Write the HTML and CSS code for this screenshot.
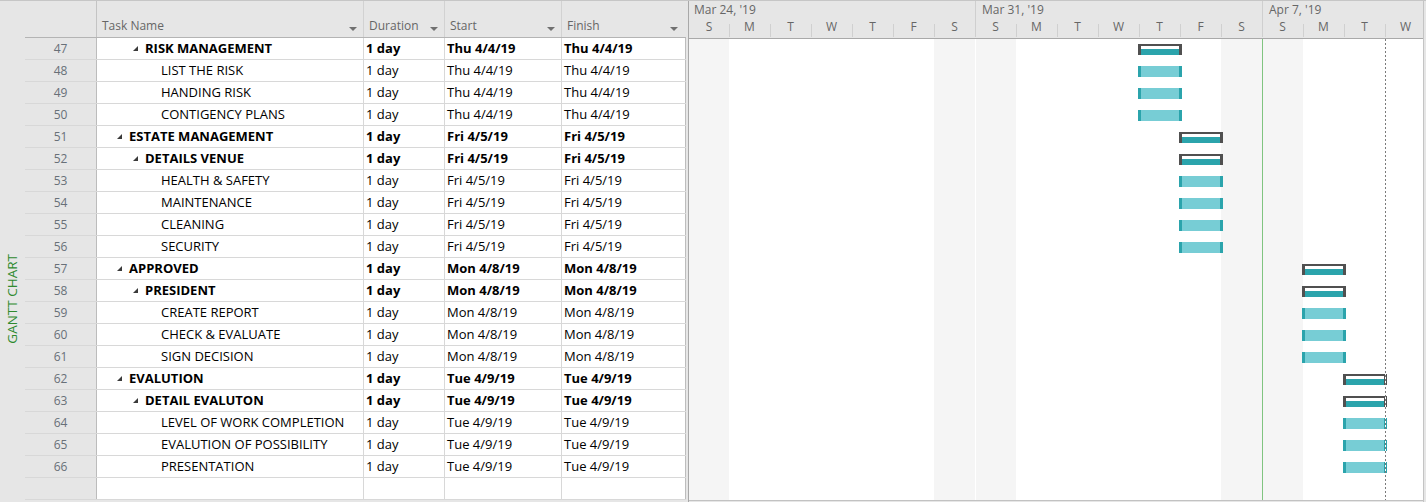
FILE: index.html
```html
<!DOCTYPE html>
<html>
<head>
<meta charset="utf-8">
<link rel="stylesheet" href="styles.css">
</head>
<body>
<div class="app">
  <div class="viewbar"><span class="viewbar-label">GANTT CHART</span></div>

  <div class="grid">
    <div class="ghead">
      <div class="hcell num"></div>
      <div class="hcell arrow">Task Name</div>
      <div class="hcell arrow">Duration</div>
      <div class="hcell arrow">Start</div>
      <div class="hcell arrow last">Finish</div>
    </div>

    <div class="grow bold"><div class="cell num">47</div><div class="cell task lvl2"><i class="toggle"></i>RISK MANAGEMENT</div><div class="cell">1 day</div><div class="cell">Thu 4/4/19</div><div class="cell">Thu 4/4/19</div></div>
    <div class="grow"><div class="cell num">48</div><div class="cell task lvl3">LIST THE RISK</div><div class="cell">1 day</div><div class="cell">Thu 4/4/19</div><div class="cell">Thu 4/4/19</div></div>
    <div class="grow"><div class="cell num">49</div><div class="cell task lvl3">HANDING RISK</div><div class="cell">1 day</div><div class="cell">Thu 4/4/19</div><div class="cell">Thu 4/4/19</div></div>
    <div class="grow"><div class="cell num">50</div><div class="cell task lvl3">CONTIGENCY PLANS</div><div class="cell">1 day</div><div class="cell">Thu 4/4/19</div><div class="cell">Thu 4/4/19</div></div>
    <div class="grow bold"><div class="cell num">51</div><div class="cell task lvl1"><i class="toggle"></i>ESTATE MANAGEMENT</div><div class="cell">1 day</div><div class="cell">Fri 4/5/19</div><div class="cell">Fri 4/5/19</div></div>
    <div class="grow bold"><div class="cell num">52</div><div class="cell task lvl2"><i class="toggle"></i>DETAILS VENUE</div><div class="cell">1 day</div><div class="cell">Fri 4/5/19</div><div class="cell">Fri 4/5/19</div></div>
    <div class="grow"><div class="cell num">53</div><div class="cell task lvl3">HEALTH &amp; SAFETY</div><div class="cell">1 day</div><div class="cell">Fri 4/5/19</div><div class="cell">Fri 4/5/19</div></div>
    <div class="grow"><div class="cell num">54</div><div class="cell task lvl3">MAINTENANCE</div><div class="cell">1 day</div><div class="cell">Fri 4/5/19</div><div class="cell">Fri 4/5/19</div></div>
    <div class="grow"><div class="cell num">55</div><div class="cell task lvl3">CLEANING</div><div class="cell">1 day</div><div class="cell">Fri 4/5/19</div><div class="cell">Fri 4/5/19</div></div>
    <div class="grow"><div class="cell num">56</div><div class="cell task lvl3">SECURITY</div><div class="cell">1 day</div><div class="cell">Fri 4/5/19</div><div class="cell">Fri 4/5/19</div></div>
    <div class="grow bold"><div class="cell num">57</div><div class="cell task lvl1"><i class="toggle"></i>APPROVED</div><div class="cell">1 day</div><div class="cell">Mon 4/8/19</div><div class="cell">Mon 4/8/19</div></div>
    <div class="grow bold"><div class="cell num">58</div><div class="cell task lvl2"><i class="toggle"></i>PRESIDENT</div><div class="cell">1 day</div><div class="cell">Mon 4/8/19</div><div class="cell">Mon 4/8/19</div></div>
    <div class="grow"><div class="cell num">59</div><div class="cell task lvl3">CREATE REPORT</div><div class="cell">1 day</div><div class="cell">Mon 4/8/19</div><div class="cell">Mon 4/8/19</div></div>
    <div class="grow"><div class="cell num">60</div><div class="cell task lvl3">CHECK &amp; EVALUATE</div><div class="cell">1 day</div><div class="cell">Mon 4/8/19</div><div class="cell">Mon 4/8/19</div></div>
    <div class="grow"><div class="cell num">61</div><div class="cell task lvl3">SIGN DECISION</div><div class="cell">1 day</div><div class="cell">Mon 4/8/19</div><div class="cell">Mon 4/8/19</div></div>
    <div class="grow bold"><div class="cell num">62</div><div class="cell task lvl1"><i class="toggle"></i>EVALUTION</div><div class="cell">1 day</div><div class="cell">Tue 4/9/19</div><div class="cell">Tue 4/9/19</div></div>
    <div class="grow bold"><div class="cell num">63</div><div class="cell task lvl2"><i class="toggle"></i>DETAIL EVALUTON</div><div class="cell">1 day</div><div class="cell">Tue 4/9/19</div><div class="cell">Tue 4/9/19</div></div>
    <div class="grow"><div class="cell num">64</div><div class="cell task lvl3">LEVEL OF WORK COMPLETION</div><div class="cell">1 day</div><div class="cell">Tue 4/9/19</div><div class="cell">Tue 4/9/19</div></div>
    <div class="grow"><div class="cell num">65</div><div class="cell task lvl3">EVALUTION OF POSSIBILITY</div><div class="cell">1 day</div><div class="cell">Tue 4/9/19</div><div class="cell">Tue 4/9/19</div></div>
    <div class="grow"><div class="cell num">66</div><div class="cell task lvl3">PRESENTATION</div><div class="cell">1 day</div><div class="cell">Tue 4/9/19</div><div class="cell">Tue 4/9/19</div></div>
    <div class="grow"><div class="cell num"></div><div class="cell"></div><div class="cell"></div><div class="cell"></div><div class="cell"></div></div>
  </div>

  <div class="splitter"></div>

  <div class="chart">
    <div class="chead">
      <div class="tier-top">
        <div class="week w1">Mar 24, '19</div>
        <div class="week w2">Mar 31, '19</div>
        <div class="week w3">Apr 7, '19</div>
      </div>
      <div class="tier-bot">
        <div class="day">S</div><div class="day">M</div><div class="day">T</div><div class="day">W</div><div class="day">T</div><div class="day">F</div><div class="day">S</div>
        <div class="day wk">S</div><div class="day">M</div><div class="day">T</div><div class="day">W</div><div class="day">T</div><div class="day">F</div><div class="day">S</div>
        <div class="day wk">S</div><div class="day">M</div><div class="day">T</div><div class="day">W</div>
      </div>
    </div>
    <div class="cbody">
      <div class="shade">
        <div class="we"></div><div></div><div></div><div></div><div></div><div></div><div class="we"></div>
        <div class="we wk1"></div><div></div><div></div><div></div><div></div><div></div><div class="we"></div>
        <div class="we wk2"></div><div></div><div></div><div></div>
      </div>
      <div class="rows">
        <div class="crow"><div class="bar sum thu"></div></div>
        <div class="crow"><div class="bar task thu"></div></div>
        <div class="crow"><div class="bar task thu"></div></div>
        <div class="crow"><div class="bar task thu"></div></div>
        <div class="crow"><div class="bar sum fri"></div></div>
        <div class="crow"><div class="bar sum fri"></div></div>
        <div class="crow"><div class="bar task fri"></div></div>
        <div class="crow"><div class="bar task fri"></div></div>
        <div class="crow"><div class="bar task fri"></div></div>
        <div class="crow"><div class="bar task fri"></div></div>
        <div class="crow"><div class="bar sum mon"></div></div>
        <div class="crow"><div class="bar sum mon"></div></div>
        <div class="crow"><div class="bar task mon"></div></div>
        <div class="crow"><div class="bar task mon"></div></div>
        <div class="crow"><div class="bar task mon"></div></div>
        <div class="crow"><div class="bar sum tue"></div></div>
        <div class="crow"><div class="bar sum tue"></div></div>
        <div class="crow"><div class="bar task tue"></div></div>
        <div class="crow"><div class="bar task tue"></div></div>
        <div class="crow"><div class="bar task tue"></div></div>
      </div>
      <div class="finish-line"></div>
    </div>
  </div>
</div>
</body>
</html>
```
FILE: styles.css
```css
html, body {
  margin: 0;
  padding: 0;
}
body {
  width: 1426px;
  height: 502px;
  overflow: hidden;
  background: #e6e6e6;
  font-family: "Open Sans", "Noto Sans", sans-serif;
}
.app {
  display: flex;
  height: 502px;
  border-top: 1px solid #c6c6c6;
  box-sizing: border-box;
}

/* left view bar */
.viewbar {
  width: 25px;
  flex: none;
  display: flex;
  flex-direction: column;
  align-items: center;
  padding-top: 253px;
  box-sizing: border-box;
}
.viewbar-label {
  writing-mode: vertical-rl;
  transform: rotate(180deg);
  color: #2f8a2f;
  font-size: 13.5px;
  line-height: 15px;
  white-space: nowrap;
}

/* table grid */
.grid {
  width: 661px;
  flex: none;
  display: flex;
  flex-direction: column;
}
.ghead,
.grow {
  display: grid;
  grid-template-columns: 72px 267px 81px 117px 124px;
  box-sizing: border-box;
}
.ghead {
  height: 37px;
  border-bottom: 1px solid #b4b4b4;
}
.hcell {
  display: flex;
  align-items: flex-end;
  justify-content: space-between;
  padding: 0 6px 2px 5px;
  border-right: 1px solid #d2d2d2;
  font-size: 12px;
  line-height: 18px;
  color: #666;
  white-space: nowrap;
}
.hcell.num {
  border-right-color: #c4c4c4;
}
.hcell.last {
  padding-right: 8px;
  border-right: none;
}
.hcell.arrow::after {
  content: "";
  width: 0;
  height: 0;
  border-left: 4px solid transparent;
  border-right: 4px solid transparent;
  border-top: 4px solid #707070;
  margin-bottom: 4px;
}
.grow {
  height: 22px;
  border-bottom: 1px solid #d8d8d8;
}
.cell {
  background: #fff;
  border-right: 1px solid #d8d8d8;
  padding-left: 2px;
  font-size: 13px;
  line-height: 21px;
  color: #000;
  white-space: nowrap;
  overflow: hidden;
}
.cell:last-child {
  border-right-color: #bdbdbd;
}
.cell.num {
  background: #e6e6e6;
  border-right-color: #bcbcbc;
  padding: 0;
  text-align: center;
  font-size: 12px;
  color: #687078;
}
.grow.bold .cell {
  font-weight: 700;
}
.grow.bold .cell.num {
  font-weight: 400;
}
.task {
  display: flex;
  align-items: center;
}
.lvl1 { padding-left: 32px; }
.lvl2 { padding-left: 48px; }
.lvl3 { padding-left: 64px; }
.toggle {
  width: 0;
  height: 0;
  border-left: 5px solid transparent;
  border-bottom: 5px solid #3a3a3a;
  margin-left: -12px;
  margin-right: 7px;
  margin-top: -1px;
}

/* splitter */
.splitter {
  width: 3px;
  flex: none;
  border-right: 1px solid #a8a8a8;
  box-sizing: border-box;
}

/* gantt chart */
.chart {
  width: 734px;
  flex: none;
  overflow: hidden;
  border-right: 1px solid #c4c4c4;
}
.chead {
  width: 737px;
  height: 37px;
  border-bottom: 1px solid #a9a9a9;
  display: flex;
  flex-direction: column;
}
.tier-top {
  display: flex;
  height: 16px;
}
.week {
  flex: none;
  box-sizing: border-box;
  padding-left: 5px;
  font-size: 12px;
  line-height: 17px;
  color: #666;
  white-space: nowrap;
}
.week + .week {
  border-left: 1px solid #cfcfcf;
  padding-left: 6px;
}
.w1 { width: 286px; }
.w2 { width: 287px; }
.w3 { width: 164px; }
.tier-bot,
.shade,
.crow {
  display: grid;
  grid-template-columns: 40px repeat(17, 41px);
}
.tier-bot {
  height: 20px;
}
.day {
  text-align: center;
  font-size: 12px;
  line-height: 19px;
  color: #666;
  background: linear-gradient(#d0d0d0, #d0d0d0) left bottom / 1px 13px no-repeat;
}
.day:first-child {
  background: none;
}
.day.wk {
  background-size: 1px 100%;
  background-image: linear-gradient(#cfcfcf, #cfcfcf);
}
.cbody {
  position: relative;
  width: 737px;
  height: 461px;
  border-bottom: 1px solid #c2c2c2;
  background: #fff;
}
.shade {
  height: 100%;
}
.shade > div {
  background: #fff;
}
.shade > .we {
  background: #f5f5f5;
}
.shade > .wk1 {
  border-left: 1px solid #fff;
}
.shade > .wk2 {
  border-left: 1px solid #80c480;
}
.rows {
  position: absolute;
  inset: 0;
  display: flex;
  flex-direction: column;
}
.crow {
  height: 22px;
  flex: none;
}
.bar {
  grid-row: 1;
  height: 11px;
  margin: 5px -2px 0 -1px;
  box-sizing: border-box;
}
.bar.thu { grid-column: 12; }
.bar.fri { grid-column: 13; }
.bar.mon { grid-column: 16; }
.bar.tue { grid-column: 17; }
.bar.sum {
  background: #505050;
  padding: 2px 3px 0;
}
.bar.sum::before {
  content: "";
  display: block;
  height: 9px;
  background: linear-gradient(#fff 0 3px, #2ba4ac 3px);
}
.bar.task {
  background: linear-gradient(to right, #2ba4ac 0 3px, #77cdd5 3px calc(100% - 3px), #2ba4ac calc(100% - 3px));
}
.finish-line {
  position: absolute;
  top: 0;
  bottom: 0;
  left: 696px;
  width: 1px;
  background: repeating-linear-gradient(#7a7a7a 0 2px, #fff 2px 4px);
}
```
